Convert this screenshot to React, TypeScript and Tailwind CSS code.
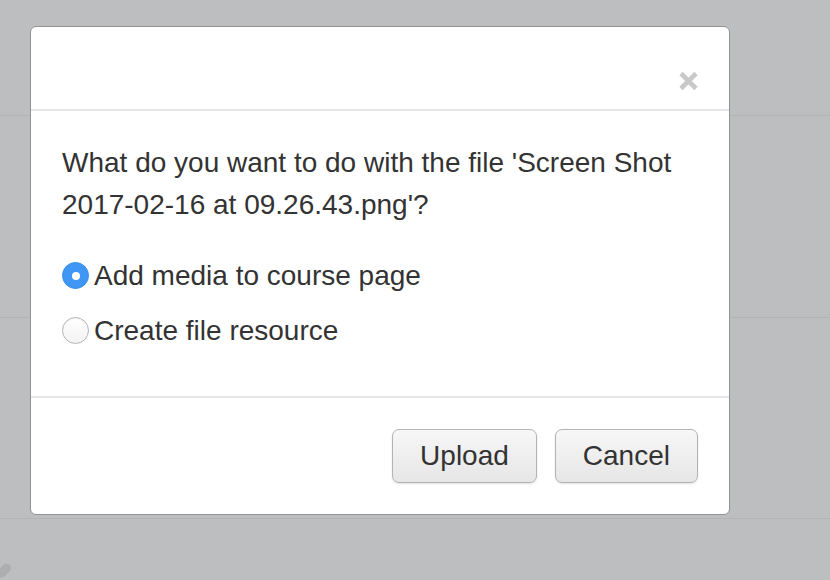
import React from "react";

export default function App() {
  return (
    <div
      className="relative w-[830px] h-[580px] overflow-hidden bg-[#bdbec0]"
      style={{ fontFamily: '"Liberation Sans", Arial, sans-serif' }}
    >
      {/* background page rows */}
      <div className="flex flex-col">
        <div className="h-[116px] border-b border-[#b3b4b6]" />
        <div className="h-[202px] border-b border-[#b3b4b6]" />
        <div className="h-[201px] border-b border-[#b3b4b6]" />
      </div>
      <div className="absolute left-[-4px] top-[566px] w-[16px] h-[9px] rounded-full bg-[#adaeb0] rotate-[-45deg]" />

      {/* modal */}
      <div className="absolute left-[30px] top-[26px] w-[700px] h-[489px] bg-white border border-[#939393] rounded-[6px] flex flex-col text-[#333333]">
        <div className="h-[84px] border-b-2 border-[#e6e6e6] flex items-end justify-end pr-[30px] pb-[18px] shrink-0">
          <svg width="21" height="20" viewBox="0 0 21 20">
            <path d="M3 2.5 L18 17.5 M18 2.5 L3 17.5" stroke="#c9c9c9" strokeWidth="4.6" strokeLinecap="butt" />
          </svg>
        </div>
        <div className="h-[287px] border-b-2 border-[#e6e6e6] pt-[31px] px-[31px] shrink-0">
          <p className="text-[28px] leading-[42px] m-0">
            What do you want to do with the file 'Screen Shot 2017-02-16 at 09.26.43.png'?
          </p>
          <div className="mt-[22px] flex flex-col">
            <label className="h-[55px] flex items-center text-[28px]">
              <span className="w-[27px] h-[27px] rounded-full bg-[#3f96f5] border border-[#3a8de8] flex items-center justify-center mr-[5px] shrink-0">
                <span className="w-[8px] h-[8px] rounded-full bg-white" />
              </span>
              <span>Add media to course page</span>
            </label>
            <label className="h-[55px] flex items-center text-[28px]">
              <span className="w-[27px] h-[27px] rounded-full bg-gradient-to-b from-white to-[#f3f3f3] border border-[#b5b5b5] mr-[5px] shrink-0 shadow-[inset_0_1px_1px_rgba(0,0,0,0.05)]" />
              <span>Create file resource</span>
            </label>
          </div>
        </div>
        <div className="flex-1 flex items-center justify-end gap-[18px] pr-[31px]">
          <button className="h-[54px] px-[27px] text-[28px] text-[#333333] rounded-[7px] border border-[#b3b3b3] bg-gradient-to-b from-[#f7f7f7] to-[#e6e6e6] shadow-[0_1px_2px_rgba(0,0,0,0.12)]">
            Upload
          </button>
          <button className="h-[54px] px-[27px] text-[28px] text-[#333333] rounded-[7px] border border-[#b3b3b3] bg-gradient-to-b from-[#f7f7f7] to-[#e6e6e6] shadow-[0_1px_2px_rgba(0,0,0,0.12)]">
            Cancel
          </button>
        </div>
      </div>
    </div>
  );
}
